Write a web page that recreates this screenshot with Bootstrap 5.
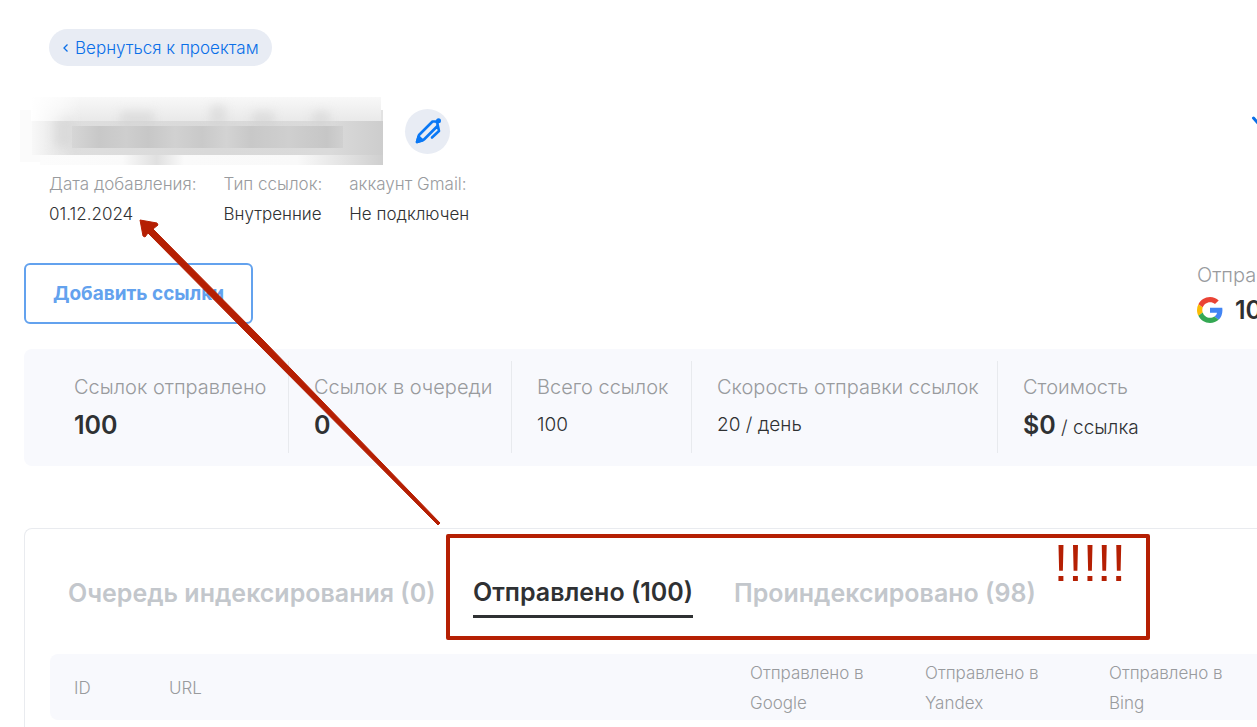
<!DOCTYPE html>
<html lang="ru">
<head>
<meta charset="utf-8">
<meta name="viewport" content="width=device-width, initial-scale=1">
<title>Проект — индексирование ссылок</title>
<link rel="stylesheet" href="https://cdn.jsdelivr.net/npm/bootstrap@5.3.0/dist/css/bootstrap.min.css">
<style>
  :root { --ink: #2f3133; --muted: #999b9e; --pale: #c3c7cc; --panel: #f8f9fd; --chip: #e8ecf4; --link: #0a6fe8; --alert: #b51f03; }
  body { font-family: Inter, "Open Sans", sans-serif; font-size: 17px; line-height: 30px; font-weight: 300; color: var(--ink); background: #fff; }
  .page { min-height: 100vh; padding: 29px 0 0 24px; }
  .inset { margin-left: 25px; }
  .back-link { height: 37px; padding: 0 13px; border-radius: 19px; background: var(--chip); color: var(--link); gap: 6px; }
  .title-row { margin: 31px 0 4px -4px; gap: 22px; }
  .title-mask { width: 363px; height: 68px; }
  .edit-btn { width: 45px; height: 45px; background: var(--chip); border: 0; }
  .soft { color: var(--muted); }
  .meta { gap: 27px; }
  .meta dt, .meta dd { font-weight: inherit; margin: 0; }
  .add-btn { width: 229px; height: 61px; border: 2px solid #63a2ee; border-radius: 6px; color: #63a2ee; background: #fff; font-size: 19px; font-weight: 700; }
  .actions { margin-top: 34px; height: 61px; }
  .sent { width: 60px; font-size: 20px; line-height: 24px; white-space: nowrap; }
  .sent-total { gap: 12px; height: 46px; }
  .amount { font-size: 25px; font-weight: 600; }
  .stats { grid-template-columns: 240px 223px 180px 306px 1fr; margin-top: 25px; padding: 12px 0 13px 24px; border-radius: 8px 0 0 8px; background: var(--panel); font-size: 20px; white-space: nowrap; }
  .stat { height: 92px; padding: 11px 0 0 25px; border-left: 1px solid #e8eaee; }
  .stat:first-child { border-left-color: transparent; }
  .stat-value { height: 46px; line-height: 46px; }
  .stat-value:not(.amount) { font-size: 19px; }
  .panel-box { margin-top: 62px; padding: 39px 0 0 25px; border: 1px solid #e9ebef; border-width: 1px 0 0 1px; border-radius: 8px 0 0 0; height: 200px; }
  .tab-row { grid-template-columns: 405px 261px auto; padding-left: 18px; font-size: 25px; font-weight: 600; white-space: nowrap; justify-content: start; height: 86px; }
  .tab-row button { border: 0; background: none; padding: 0; color: var(--pale); font-weight: inherit; height: 50px; justify-self: start; }
  .tab-row .current { color: var(--ink); border-bottom: 3px solid var(--ink); }
  .callout { left: 396px; top: -34px; width: 704px; height: 106px; border: 4px solid var(--alert); border-radius: 2px; color: var(--alert); pointer-events: none; }
  .marks { right: 20px; top: -4px; font: 400 52px/58px "Liberation Sans", sans-serif; }
  .links-table { table-layout: fixed; width: 100%; font-size: 17px; }
  .links-table th { height: 66px; padding: 4px 0 2px 24px; background: var(--panel); font-weight: inherit; color: var(--muted); }
  .links-table th:first-child { border-radius: 8px 0 0 8px; }
  .arrow { left: 0; top: 0; width: 460px; height: 540px; pointer-events: none; }
  .more-mark { top: 115px; right: -8px; }
</style>
</head>
<body>
<main class="page position-relative overflow-hidden">
  <a href="#" class="back-link inset d-inline-flex align-items-center text-decoration-none">
    <svg width="7" height="10" viewBox="0 0 7 10" fill="none" stroke="currentColor" stroke-width="1.3" aria-hidden="true"><path d="M5.5 1.5 2 5l3.500 3.500"/></svg>
    Вернуться к проектам
  </a>

  <div class="title-row d-flex align-items-center">
    <svg class="title-mask" viewBox="0 0 363 68" aria-hidden="true">
      <defs>
        <linearGradient id="top" x2="0" y2="1"><stop stop-color="#f8f8f8"/><stop offset="1" stop-color="#e9e9e9"/></linearGradient>
        <linearGradient id="fade"><stop stop-color="#fff"/><stop offset=".6" stop-color="#fff" stop-opacity=".5"/><stop offset="1" stop-color="#fff" stop-opacity="0"/></linearGradient>
        <linearGradient id="band"><stop stop-color="#f8f8f8"/><stop offset=".12" stop-color="#dedede"/><stop offset=".5" stop-color="#d9d9d9"/><stop offset=".85" stop-color="#dadada"/><stop offset="1" stop-color="#cdcdcd"/></linearGradient>
        <linearGradient id="core"><stop stop-color="#d6d6d6"/><stop offset=".1" stop-color="#c8c8c8"/><stop offset=".2" stop-color="#cecece"/><stop offset=".28" stop-color="#c7c7c7"/><stop offset=".38" stop-color="#d1d1d1"/><stop offset=".48" stop-color="#c9c9c9"/><stop offset=".57" stop-color="#d3d3d3"/><stop offset=".66" stop-color="#c8c8c8"/><stop offset=".8" stop-color="#cfcfcf"/><stop offset=".94" stop-color="#c6c6c6"/><stop offset="1" stop-color="#d0d0d0"/></linearGradient>
        <linearGradient id="low"><stop stop-color="#fcfcfc"/><stop offset=".24" stop-color="#fafafa"/><stop offset=".34" stop-color="#e0e0e0"/><stop offset=".42" stop-color="#fafafa"/><stop offset=".75" stop-color="#f9f9f9"/><stop offset=".88" stop-color="#e4e4e4"/><stop offset="1" stop-color="#cfcfcf"/></linearGradient>
        <filter id="haze" x="-50%" y="-50%" width="200%" height="200%"><feGaussianBlur stdDeviation="5"/></filter>
      </defs>
      <rect x="0" y="13" width="40" height="52" fill="#fbfbfb"/>
      <rect x="11" width="350" height="24" fill="url(#top)"/>
      <rect x="361" y="13" width="2" height="12" fill="#e2e2e2"/>
      <rect x="12" y="24" width="351" height="34" fill="url(#band)"/>
      <g filter="url(#haze)" fill="#d0d0d0" opacity=".5"><rect x="34" y="20" width="18" height="30"/><rect x="190" y="8" width="16" height="20"/><rect x="100" y="14" width="34" height="16"/><rect x="232" y="14" width="22" height="18"/><rect x="292" y="14" width="18" height="16"/></g>
      <rect x="52" y="29" width="271" height="22" fill="url(#core)"/>
      <rect x="20" y="58" width="343" height="10" fill="url(#low)"/>
      <rect x="11" width="50" height="24" fill="url(#fade)"/>
    </svg>
    <button type="button" class="edit-btn rounded-circle d-flex align-items-center justify-content-center p-0" aria-label="Редактировать">
      <svg width="26" height="26" viewBox="0 0 26 26" fill="none" stroke="#0a78f5" stroke-width="2.600" stroke-linecap="round" stroke-linejoin="round" aria-hidden="true"><path d="M2 24 4 17 17.500 3.500H21L22.500 5V8L9 21.500ZM22.500 6 24 13 17 19.500"/><circle cx="23.500" cy="2.800" r="1.200"/><path fill="#0a78f5" d="m2 24 1.500-5.500 4 4z"/></svg>
    </button>
  </div>

  <div class="meta inset d-flex">
    <dl class="m-0"><dt class="soft">Дата добавления:</dt><dd>01.12.2024</dd></dl>
    <dl class="m-0"><dt class="soft">Тип ссылок:</dt><dd>Внутренние</dd></dl>
    <dl class="m-0"><dt class="soft">аккаунт Gmail:</dt><dd>Не подключен</dd></dl>
  </div>

  <div class="actions d-flex justify-content-between">
    <button type="button" class="add-btn">Добавить ссылки</button>
    <div class="sent">
      <div class="soft">Отправлено</div>
      <div class="sent-total d-flex align-items-center">
        <svg width="26" height="26" viewBox="0 0 48 48" class="flex-shrink-0" aria-hidden="true"><path fill="#ea4335" d="M24 9.500c3.540 0 6.710 1.220 9.210 3.600l6.850-6.850C35.900 2.380 30.470 0 24 0 14.620 0 6.510 5.380 2.560 13.220l7.980 6.190C12.430 13.720 17.740 9.500 24 9.500z"/><path fill="#4285f4" d="M46.980 24.550c0-1.570-.15-3.090-.38-4.550H24v9.020h12.940c-.58 2.960-2.260 5.480-4.780 7.180l7.730 6c4.510-4.180 7.090-10.360 7.090-17.650z"/><path fill="#fbbc05" d="M10.530 28.590A14.500 14.500 0 0 1 9.770 24c0-1.600.27-3.140.76-4.590l-7.980-6.190A23.900 23.900 0 0 0 0 24c0 3.880.92 7.540 2.560 10.780l7.970-6.190z"/><path fill="#34a853" d="M24 48c6.480 0 11.930-2.130 15.890-5.810l-7.730-6c-2.150 1.450-4.920 2.300-8.160 2.300-6.260 0-11.570-4.220-13.470-9.910l-7.980 6.190C6.510 42.620 14.620 48 24 48z"/></svg>
        <span class="amount">100</span>
      </div>
    </div>
  </div>

  <section class="stats d-grid">
    <div class="stat"><div class="soft">Ссылок отправлено</div><div class="stat-value amount">100</div></div>
    <div class="stat"><div class="soft">Ссылок в очереди</div><div class="stat-value amount">0</div></div>
    <div class="stat"><div class="soft">Всего ссылок</div><div class="stat-value">100</div></div>
    <div class="stat"><div class="soft">Скорость отправки ссылок</div><div class="stat-value">20 / день</div></div>
    <div class="stat"><div class="soft">Стоимость</div><div class="stat-value"><span class="amount">$0</span> / ссылка</div></div>
  </section>

  <section class="panel-box">
    <div class="tab-row d-grid position-relative">
      <button type="button">Очередь индексирования (0)</button>
      <button type="button" class="current">Отправлено (100)</button>
      <button type="button">Проиндексировано (98)</button>
      <div class="callout position-absolute"><span class="marks position-absolute">!!!!!</span></div>
    </div>
    <table class="links-table">
      <colgroup><col style="width:95px"><col style="width:581px"><col style="width:175px"><col style="width:184px"><col></colgroup>
      <thead><tr><th scope="col">ID</th><th scope="col">URL</th><th scope="col">Отправлено в<br>Google</th><th scope="col">Отправлено в<br>Yandex</th><th scope="col">Отправлено в<br>Bing</th></tr></thead>
    </table>
  </section>

  <svg class="more-mark position-absolute" width="14" height="12" viewBox="0 0 14 12" fill="none" stroke="#0a6fe8" stroke-width="3" stroke-linecap="round" aria-hidden="true"><path d="m2.500 3 4.500 5 4.500-5"/></svg>
  <svg class="arrow position-absolute" viewBox="0 0 460 540" aria-hidden="true"><path fill="#b51f03" stroke="#b51f03" stroke-linejoin="round" d="M140 220 157 223 158 225 153 229 263 340 440 523 438 525 254 340 148 233 145 237 143 236Z"/></svg>
</main>
<script src="https://cdn.jsdelivr.net/npm/bootstrap@5.3.0/dist/js/bootstrap.bundle.min.js"></script>
</body>
</html>
